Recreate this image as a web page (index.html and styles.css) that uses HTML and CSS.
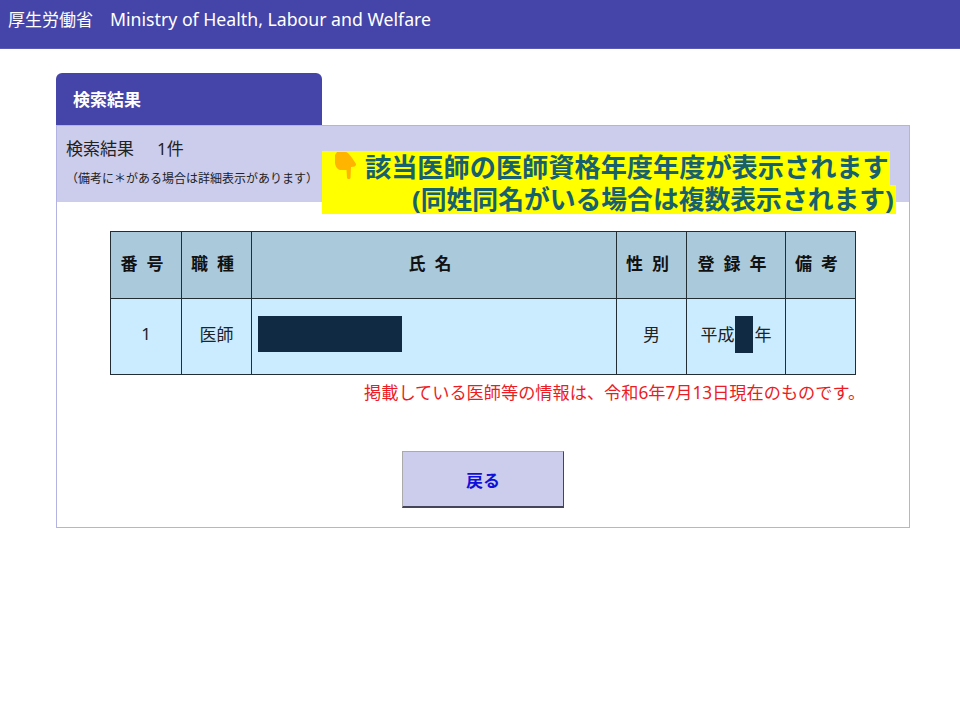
FILE: index.html
```html
<!DOCTYPE html>
<html lang="ja">
<head>
<meta charset="utf-8">
<title>検索結果</title>
<link rel="stylesheet" href="styles.css">
</head>
<body>
<header class="site-header"><span class="org-ja">厚生労働省</span><span class="org-en">Ministry of Health, Labour and Welfare</span></header>
<main class="main">
  <h1 class="tab">検索結果</h1>
  <section class="panel">
    <div class="summary">
      <p class="count"><span>検索結果</span><span class="count-num">1件</span></p>
      <p class="note">（備考に＊がある場合は詳細表示があります）</p>
    </div>
    <div class="callout">
      <p class="callout-line first"><svg class="hand" viewBox="0 0 22 27" width="22" height="27"><path d="M2 0 L11 0 C14 1 18 7 21 12 C21.500 14 19 15 16 15 L15.500 26 C15 27.500 12.500 27.500 12 26 L11.500 18 L5 18 C2 17 0 14 0 10 L0 3 Z" fill="#ffb400"/></svg><span>該当医師の医師資格年度年度が表示されます</span></p>
      <p class="callout-line second"><span>(同姓同名がいる場合は複数表示されます)</span></p>
    </div>
    <table class="results">
      <colgroup><col class="c1"><col class="c2"><col class="c3"><col class="c4"><col class="c5"><col class="c6"></colgroup>
      <thead>
        <tr><th>番 号</th><th>職 種</th><th>氏 名</th><th>性 別</th><th>登 録 年</th><th>備 考</th></tr>
      </thead>
      <tbody>
        <tr>
          <td>1</td>
          <td>医師</td>
          <td class="name"><span class="redact-name"></span></td>
          <td>男</td>
          <td><span class="year"><span>平成</span><span class="redact-year"></span><span>年</span></span></td>
          <td></td>
        </tr>
      </tbody>
    </table>
    <p class="notice">掲載している医師等の情報は、令和6年7月13日現在のものです。</p>
    <div class="actions"><button class="back" type="button">戻る</button></div>
  </section>
</main>
</body>
</html>
```
FILE: styles.css
```css
* { box-sizing: border-box; }
html, body { margin: 0; padding: 0; }
body {
  background: #fff;
  color: #222;
  font-family: "Noto Sans", "Noto Sans CJK JP", sans-serif;
}
p, h1 { margin: 0; }
.site-header {
  height: 49px;
  background: #4545a9;
  color: #fff;
  font-size: 17.700px;
  line-height: 24px;
  padding: 7px 0 0 8px;
  border-bottom: 1px solid #5a5ab2;
}
.org-ja { font-size: 17px; margin-right: 17px; }
.main { padding: 24px 50px 0 56px; }
.tab {
  width: 266px;
  height: 52px;
  background: #4545a9;
  color: #fff;
  font-size: 17px;
  line-height: 22px;
  font-weight: 700;
  padding: 16px 0 0 17px;
  border-radius: 6px 6px 0 0;
}
.panel {
  position: relative;
  width: 854px;
  height: 403px;
  border: 1px solid #b3b3e3;
  padding-bottom: 20px;
}
.summary {
  height: 76px;
  background: #ccccec;
  padding: 11px 0 0 9px;
}
.count { font-size: 17px; line-height: 24px; }
.count-num { margin-left: 23px; }
.note { font-size: 12px; line-height: 17px; margin-top: 9px; }
.callout {
  position: absolute;
  left: 265px;
  top: 25px;
  width: 574px;
  height: 63px;
  color: #17606e;
  font-size: 26.200px;
  font-weight: 700;
  line-height: 32px;
}
.callout-line { display: flex; align-items: center; background: #ffff00; white-space: nowrap; }
.callout-line.first { width: 568px; height: 34px; padding: 0 0 3px 13px; }
.callout-line.second { width: 574px; height: 29px; padding: 0 0 1px 90px; font-size: 25.800px; }
.hand { flex: none; margin: 1px 8px 0 0; align-self: flex-start; }
.results {
  width: 745px;
  margin: 29px 0 0 53px;
  border-collapse: collapse;
  table-layout: fixed;
  font-size: 17px;
}
.c1 { width: 71px; } .c2 { width: 70px; } .c3 { width: 365px; }
.c4 { width: 70px; } .c5 { width: 99px; } .c6 { width: 70px; }
.results th, .results td {
  border: 1px solid #222e33;
  text-align: center;
  padding: 0;
}
.results th {
  height: 67px;
  background: #aacadc;
  color: #111;
  font-size: 17px;
  font-weight: 700;
  word-spacing: 4.600px;
  padding: 0 8px 6px 0;
}
.results td { height: 76px; background: #cbecff; color: #222; padding-bottom: 6px; }
.results td.name { text-align: left; padding-left: 6px; }
.redact-name { display: block; width: 144px; height: 36px; background: #102a43; }
.year { display: inline-flex; align-items: center; }
.redact-year { width: 18px; height: 37px; background: #102a43; margin: 1px 2px 0 0; }
.notice {
  color: #ec1c24;
  font-size: 17.200px;
  line-height: 22px;
  margin: 7px 0 0 307px;
  white-space: nowrap;
}
.actions { margin-top: 47px; padding-left: 345px; }
.back {
  display: block;
  width: 162px;
  height: 57px;
  background: #ccccec;
  color: #1010d8;
  font: 700 17px/24px "Noto Sans", "Noto Sans CJK JP", sans-serif;
  border: 1px solid;
  border-color: #aaaaaa #44445a #44445a #aaaaaa;
  border-bottom-width: 2px;
  padding: 3px 0 0;
}
```
